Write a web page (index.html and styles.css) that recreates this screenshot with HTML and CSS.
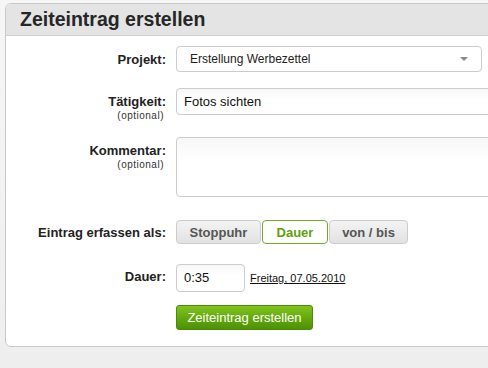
FILE: index.html
```html
<!DOCTYPE html>
<html lang="de">
<head>
    <meta charset="UTF-8">
    <meta name="viewport" content="width=device-width, initial-scale=1.0">
    <title>Zeiteintrag erstellen</title>
    <link rel="stylesheet" href="styles.css">
</head>
<body>
  <div class="panel">
    <h1 class="panel-title">Zeiteintrag erstellen</h1>

    <form class="entry-form">
      <div class="row row-project">
        <label class="label">Projekt:</label>
        <div class="select">
          <span>Erstellung Werbezettel</span>
          <span class="arrow"></span>
        </div>
      </div>

      <div class="row row-task">
        <label class="label">Tätigkeit:<small>(optional)</small></label>
        <div class="field">Fotos sichten</div>
      </div>

      <div class="row row-comment">
        <label class="label">Kommentar:<small>(optional)</small></label>
        <div class="field area"></div>
      </div>

      <div class="row row-mode">
        <label class="label">Eintrag erfassen als:</label>
        <div class="switch">
          <button type="button" class="seg seg-stop">Stoppuhr</button>
          <button type="button" class="seg seg-duration active">Dauer</button>
          <button type="button" class="seg seg-range">von / bis</button>
        </div>
      </div>

      <div class="row row-duration">
        <label class="label">Dauer:</label>
        <div class="duration">
          <div class="field small">0:35</div>
          <a href="#" class="date">Freitag, 07.05.2010</a>
        </div>
      </div>

      <div class="row row-submit">
        <span></span>
        <div><button type="button" class="submit">Zeiteintrag erstellen</button></div>
      </div>
    </form>
  </div>
</body>
</html>
```
FILE: styles.css
```css
*{
    margin: 0;
    padding: 0;
    box-sizing: border-box;
}
body{
    width: 488px;
    height: 368px;
    overflow: hidden;
    background: linear-gradient(#f6f6f6, #eeeeee);
    font-family: "Liberation Sans", Arial, sans-serif;
    color: #222;
    padding: 3px 0 0 5px;
}
.panel{
    width: 540px;
    height: 344px;
    background-color: #fff;
    border: 1px solid #c9c9c9;
    border-radius: 6px;
    overflow: hidden;
}
.panel-title{
    height: 32px;
    background-color: #e4e4e4;
    border-bottom: 1px solid #cfcfcf;
    font-size: 19.5px;
    font-weight: bold;
    color: #262626;
    line-height: 30px;
    padding-left: 14px;
}
.entry-form{
    padding-top: 10px;
}
.row{
    display: grid;
    grid-template-columns: 160px 1fr;
    column-gap: 10px;
    align-items: start;
}
.row-task{
    margin-top: 16px;
}
.row-comment{
    margin-top: 15px;
}
.row-mode{
    margin-top: 23px;
}
.row-duration{
    margin-top: 20px;
}
.row-submit{
    margin-top: 13px;
}
.label{
    text-align: right;
    font-size: 13px;
    font-weight: bold;
    line-height: 16px;
    padding-top: 6px;
    color: #222;
}
.label small{
    display: block;
    font-size: 10px;
    font-weight: normal;
    letter-spacing: 0.5px;
    line-height: 12px;
    color: #333;
    padding-right: 2px;
}
.row-mode .label, .row-duration .label{
    padding-top: 5px;
}
.select{
    width: 306px;
    height: 26px;
    border: 1px solid #cccccc;
    border-radius: 4px;
    background-color: #fff;
    display: flex;
    align-items: center;
    justify-content: space-between;
    padding: 0 13px 0 13px;
    font-size: 12px;
    color: #222;
}
.arrow{
    width: 0;
    height: 0;
    border-left: 4px solid transparent;
    border-right: 4px solid transparent;
    border-top: 4px solid #8a8a8a;
}
.field{
    height: 27px;
    border: 1px solid #cccccc;
    border-radius: 4px;
    background: linear-gradient(#f7f7f7, #fff 40%);
    font-size: 13px;
    line-height: 25px;
    padding-left: 7px;
    color: #111;
}
.area{
    height: 60px;
}
.switch{
    display: flex;
    gap: 1px;
}
.seg{
    height: 24px;
    border: 1px solid #cccccc;
    border-radius: 4px;
    background: linear-gradient(#f3f3f3, #e2e2e2);
    font-family: "Liberation Sans", Arial, sans-serif;
    font-size: 13px;
    font-weight: bold;
    color: #555;
}
.seg-stop{
    width: 85px;
}
.seg-duration{
    width: 66px;
}
.seg-range{
    width: 79px;
}
.seg.active{
    background: #fff;
    border-color: #6fac22;
    color: #5f9f0c;
}
.duration{
    display: flex;
    align-items: center;
    gap: 5px;
}
.small{
    width: 69px;
    height: 28px;
    line-height: 26px;
}
.date{
    font-size: 11px;
    color: #111;
    text-decoration: underline;
}
.submit{
    width: 137px;
    height: 25px;
    border: 1px solid #4a8a0c;
    border-radius: 3px;
    background: linear-gradient(#80c31c, #4c9102);
    color: #fff;
    font-family: "Liberation Sans", Arial, sans-serif;
    font-size: 13px;
}
```
